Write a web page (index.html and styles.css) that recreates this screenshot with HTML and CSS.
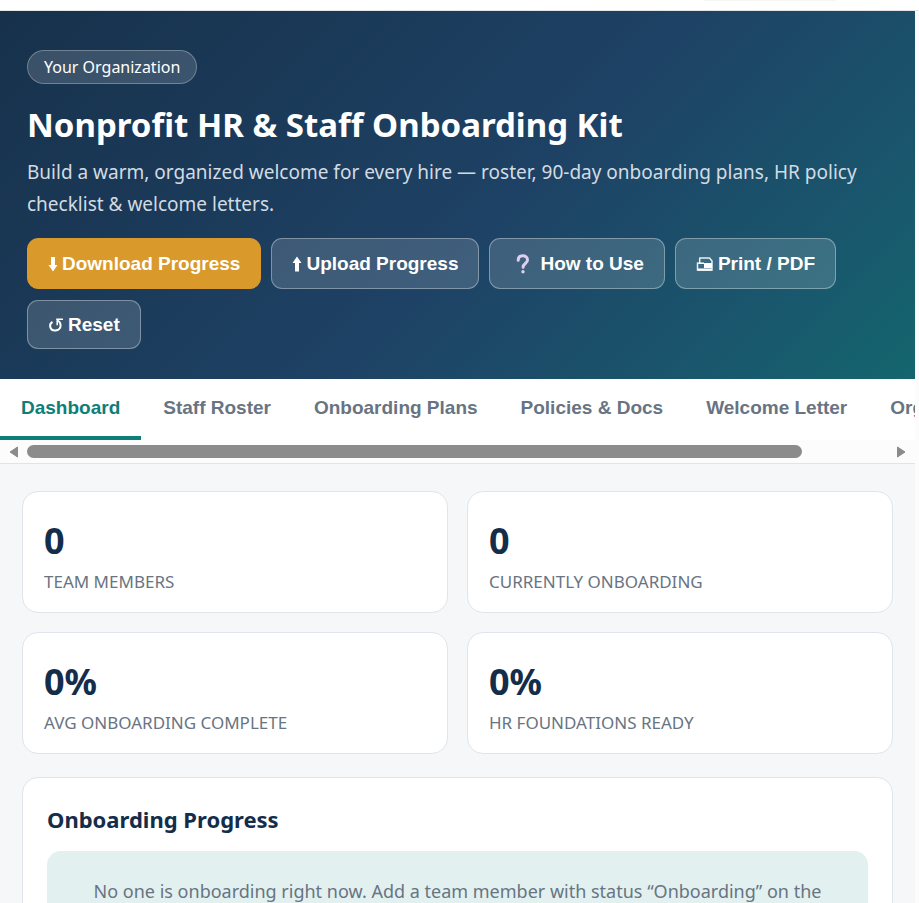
FILE: index.html
```html
<!DOCTYPE html>
<html lang="en">
<head>
<meta charset="utf-8">
<meta name="viewport" content="width=device-width, initial-scale=1">
<title>Nonprofit HR &amp; Staff Onboarding Kit</title>
<link rel="stylesheet" href="styles.css">
</head>
<body>
<div class="topbar"><div class="topbar-tab"></div></div>
<div class="app">
  <header class="hero">
    <span class="org">Your Organization</span>
    <h1>Nonprofit HR &amp; Staff Onboarding Kit</h1>
    <p class="lead">Build a warm, organized welcome for every hire — roster, 90-day onboarding plans, HR policy checklist &amp; welcome letters.</p>
    <div class="actions">
      <button class="btn btn-primary" type="button">
        <svg class="icon-arrow" viewBox="0 0 10 16" aria-hidden="true"><path d="M3 1h4v8h2.500L5 15.500.5 9H3z"/></svg>
        Download Progress
      </button>
      <button class="btn" type="button">
        <svg class="icon-arrow" viewBox="0 0 10 16" aria-hidden="true"><path d="M3 15.500h4V7h2.500L5 .5.500 7H3z"/></svg>
        Upload Progress
      </button>
      <button class="btn" type="button">
        <svg class="icon-help" viewBox="0 0 26 20" aria-hidden="true"><path d="M8.200 6.200C8.200 3.300 10 1.800 12.700 1.800s4.800 1.500 4.800 4.200c0 3.600-4.400 3.400-4.400 7.200" fill="none" stroke="#dccff0" stroke-width="3" stroke-linecap="round"/><circle cx="13" cy="17.700" r="1.700" fill="#dccff0"/></svg>
        How to Use
      </button>
      <button class="btn" type="button">
        <svg class="icon-print" viewBox="0 0 18 16" aria-hidden="true"><path d="M3.700 7V2h9.800L16 5v9.300H1.500V7z" fill="none" stroke="#e8eef3" stroke-width="1.500" stroke-linejoin="round"/><path d="M8 7h8v5H8zM3 6.500h5V8H3zM2 12.500h14V14H2z" fill="#fff"/></svg>
        Print / PDF
      </button>
      <button class="btn btn-reset" type="button">
        <svg class="icon-reset" viewBox="0 0 16 16" aria-hidden="true"><path d="M4.500 4.800C2.500 6 1.800 7.800 2.200 9.700c.5 2.400 2.800 3.900 5.400 3.700 3-.2 5.100-2.500 5-5.200-.1-2-1.200-3.700-3-4.700" fill="none" stroke="#fff" stroke-width="2"/><path d="M8.200 2.300H15M9.200 2v6.300" fill="none" stroke="#fff" stroke-width="1.500"/></svg>
        Reset
      </button>
    </div>
  </header>

  <div class="tabs-wrap">
    <nav class="tabs">
      <button class="tab active" type="button">Dashboard</button>
      <button class="tab" type="button">Staff Roster</button>
      <button class="tab" type="button">Onboarding Plans</button>
      <button class="tab" type="button">Policies &amp; Docs</button>
      <button class="tab" type="button">Welcome Letter</button>
      <button class="tab" type="button">Org Settings</button>
    </nav>
    <div class="scroller" aria-hidden="true">
      <svg class="scroll-arrow" viewBox="0 0 10 12"><path d="M8.500 1v10L1 6z"/></svg>
      <div class="track"><div class="thumb"></div></div>
      <svg class="scroll-arrow" viewBox="0 0 10 12"><path d="M1.500 1v10L9 6z"/></svg>
    </div>
  </div>

  <main class="content">
    <section class="stats">
      <div class="stat"><div class="num">0</div><div class="label">Team Members</div></div>
      <div class="stat"><div class="num">0</div><div class="label">Currently Onboarding</div></div>
      <div class="stat"><div class="num">0%</div><div class="label">Avg Onboarding Complete</div></div>
      <div class="stat"><div class="num">0%</div><div class="label">HR Foundations Ready</div></div>
    </section>
    <section class="card">
      <h2>Onboarding Progress</h2>
      <div class="empty">No one is onboarding right now. Add a team member with status “Onboarding” on the Staff Roster tab.</div>
    </section>
  </main>
</div>
</body>
</html>
```
FILE: styles.css
```css
* { box-sizing: border-box; }

html, body { height: 100%; }

body {
  margin: 0;
  display: flex;
  flex-direction: column;
  overflow: hidden;
  background: #fcfcfc;
  color: #142d4a;
  font-family: "Segoe UI", "Noto Sans", sans-serif;
}

.topbar {
  flex: none;
  height: 11px;
  padding-right: 83px;
  background: #fff;
  border-bottom: 1px solid #e3e5e7;
}

.topbar-tab {
  width: 132px;
  height: 1px;
  margin-left: auto;
  background: #f5f5f5;
}

.app {
  flex: 1;
  min-height: 0;
  margin-right: 4px;
  overflow: hidden;
  background: #f5f7f9;
}

.hero {
  padding: 39px 27px 30px;
  color: #fff;
  background: linear-gradient(135deg, #17314b 0%, #1e4265 55%, #19576d 83%, #14666e 100%);
}

.org {
  display: inline-block;
  padding: 0 16px;
  border: 1px solid rgba(255, 255, 255, 0.28);
  border-radius: 17px;
  background: rgba(255, 255, 255, 0.15);
  font-size: 16px;
  line-height: 32px;
  vertical-align: top;
}

h1 {
  margin: 19px 0 9px;
  font-size: 33px;
  line-height: 44px;
  font-weight: 700;
}

.lead {
  margin: 0;
  color: #d3dbe2;
  font-size: 19px;
  line-height: 32px;
}

.actions {
  display: flex;
  flex-wrap: wrap;
  gap: 11px 10px;
  margin-top: 18px;
}

.btn {
  display: inline-flex;
  align-items: center;
  gap: 4px;
  height: 51px;
  padding: 0 20px;
  border: 1px solid rgba(255, 255, 255, 0.35);
  border-radius: 11px;
  background: rgba(255, 255, 255, 0.15);
  color: #fff;
  font: 700 19px "Liberation Sans", Arial, sans-serif;
}

.btn-primary {
  border-color: #d9992b;
  background: #d9992b;
}

.btn-reset { height: 49px; }

.btn svg { flex: none; fill: currentColor; }
.icon-arrow { width: 10px; height: 16px; }
.icon-help { width: 26px; height: 20px; }
.icon-print { width: 18px; height: 16px; }
.icon-reset { width: 16px; height: 16px; }

.tabs-wrap {
  background: #fff;
  border-bottom: 1px solid #dfe4e9;
}

.tabs {
  display: flex;
  gap: 1px;
  overflow: hidden;
}

.tab {
  flex: none;
  height: 61px;
  padding: 0 21px;
  border: 0;
  border-bottom: 4px solid transparent;
  background: none;
  color: #687482;
  font: 700 19px "Liberation Sans", Arial, sans-serif;
}

.tab.active {
  color: #0e7e78;
  border-bottom-color: #0e7e78;
}

.scroller {
  display: flex;
  align-items: center;
  gap: 8px;
  height: 23px;
  padding: 0 9px;
  background: #fcfcfc;
}

.scroll-arrow {
  flex: none;
  width: 10px;
  height: 12px;
  fill: #8b8b8b;
  stroke: #8b8b8b;
  stroke-linejoin: round;
}

.track { flex: 1; }

.thumb {
  width: 90%;
  height: 13px;
  border-radius: 7px;
  background: #8b8b8b;
}

.content { padding: 27px 22px; }

.stats {
  display: grid;
  grid-template-columns: 1fr 1fr;
  gap: 19px;
}

.stat, .card {
  border: 1px solid #dfe5ea;
  border-radius: 16px;
  background: #fff;
}

.stat { padding: 25px 21px 16px; }

.num {
  margin-bottom: 2px;
  font-size: 36px;
  line-height: 48px;
  font-weight: 700;
}

.label {
  color: #687482;
  font-size: 17px;
  line-height: 29px;
  text-transform: uppercase;
}

.card {
  margin-top: 23px;
  padding: 24px;
}

h2 {
  margin: 0 0 14px;
  font-size: 22px;
  line-height: 35px;
}

.empty {
  padding: 24px 38px;
  border-radius: 14px;
  background: #e2f1f0;
  color: #687482;
  font-size: 18px;
  line-height: 32px;
  text-align: center;
}
```
